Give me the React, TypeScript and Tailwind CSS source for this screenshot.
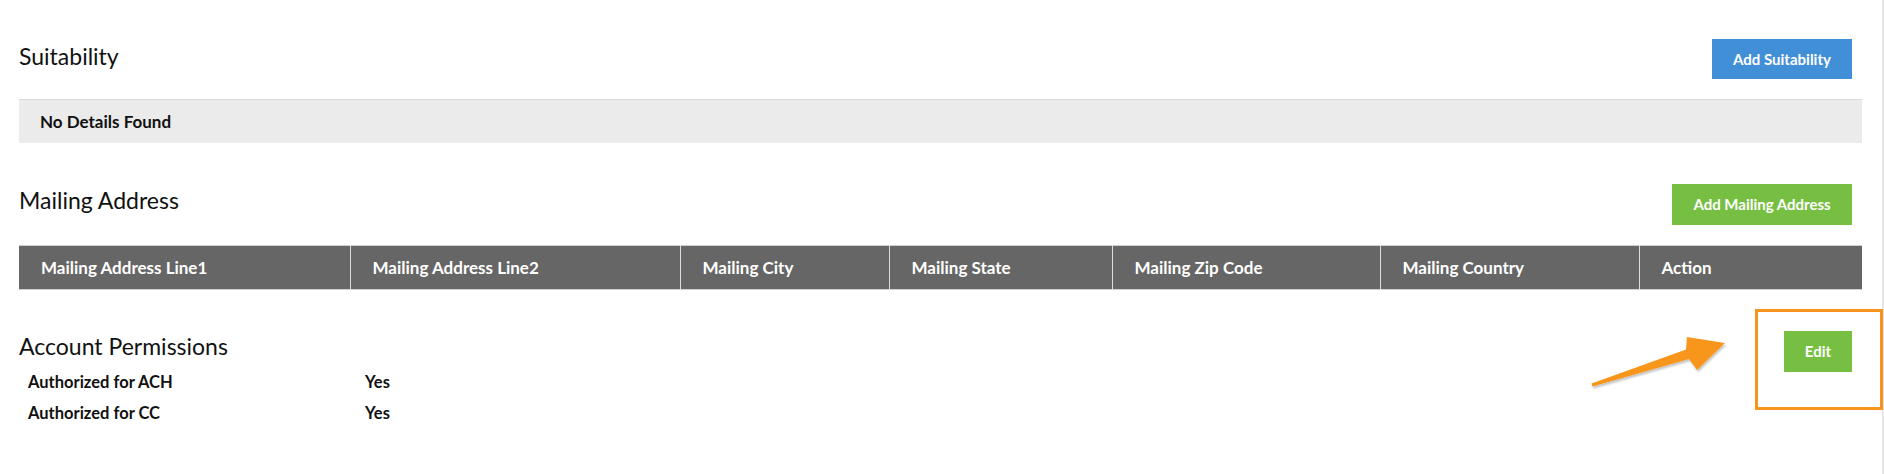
import React from "react";

const columns = [
  { label: "Mailing Address Line1", w: "w-[331px]" },
  { label: "Mailing Address Line2", w: "w-[330px]" },
  { label: "Mailing City", w: "w-[209px]" },
  { label: "Mailing State", w: "w-[223px]" },
  { label: "Mailing Zip Code", w: "w-[268px]" },
  { label: "Mailing Country", w: "w-[259px]" },
  { label: "Action", w: "w-[223px]" },
];

const permissions = [
  { label: "Authorized for ACH", value: "Yes" },
  { label: "Authorized for CC", value: "Yes" },
];

const Arrow = () => (
  <svg
    className="absolute left-[1585px] top-[330px]"
    width="150"
    height="65"
    viewBox="0 0 150 65"
  >
    <defs>
      <filter id="shadow" x="-10%" y="-20%" width="130%" height="150%">
        <feDropShadow dx="1" dy="2" stdDeviation="1.2" floodColor="#000" floodOpacity="0.25" />
      </filter>
    </defs>
    <polygon
      points="6.5,53.6 101,19.5 102,7 140,13 112,40 104,29 7.5,56.4"
      fill="#f8961f"
      filter="url(#shadow)"
    />
  </svg>
);

const App = () => {
  return (
    <div
      className="relative w-[1884px] h-[474px] bg-white border-r-2 border-[#e6e6e6] pl-[19px] pr-[20px] text-[#111]"
      style={{ fontFamily: "Lato, 'Open Sans', sans-serif" }}
    >
      {/* Suitability */}
      <div className="flex justify-between items-start pt-[39px]">
        <h2 className="text-[23px] leading-[34px] font-normal">Suitability</h2>
        <button className="mr-[10px] w-[140px] h-[40px] bg-[#4190d7] text-white text-[15px] font-bold">
          Add Suitability
        </button>
      </div>
      <div className="mt-[20px] h-[44px] bg-[#ebebeb] border-t border-[#dadada] flex items-center pl-[21px]">
        <span className="text-[17px] font-bold">No Details Found</span>
      </div>

      {/* Mailing Address */}
      <div className="flex justify-between items-start mt-[41px]">
        <h2 className="text-[23px] leading-[32px] font-normal">Mailing Address</h2>
        <button className="mr-[10px] w-[180px] h-[41px] bg-[#77bf43] text-white text-[15px] font-bold">
          Add Mailing Address
        </button>
      </div>
      <table className="mt-[20px] w-full table-fixed border-collapse">
        <thead>
          <tr className="bg-[#666666] h-[44px] border-y border-[#cfcfcf]">
            {columns.map((c, i) => (
              <th
                key={c.label}
                className={`${c.w} text-left text-white text-[17px] font-bold pl-[22px] ${i > 0 ? "border-l border-[#dddddd]" : ""}`}
              >
                {c.label}
              </th>
            ))}
          </tr>
        </thead>
      </table>

      {/* Account Permissions */}
      <div className="flex justify-between items-start mt-[41px]">
        <div>
          <h2 className="text-[23px] leading-[30px] font-normal">Account Permissions</h2>
          <div className="mt-[6px]">
            {permissions.map((p) => (
              <div key={p.label} className="flex h-[31px] items-center text-[16.5px] font-bold">
                <span className="pl-[9px] w-[346px]">{p.label}</span>
                <span>{p.value}</span>
              </div>
            ))}
          </div>
        </div>
        <button className="mr-[10px] w-[68px] h-[41px] bg-[#77bf43] text-white text-[15px] font-bold">
          Edit
        </button>
      </div>

      {/* annotation */}
      <div className="absolute left-[1755px] top-[309px] w-[128px] h-[101px] border-[3px] border-[#f7941e]" />
      <Arrow />
    </div>
  );
};

export default App;
